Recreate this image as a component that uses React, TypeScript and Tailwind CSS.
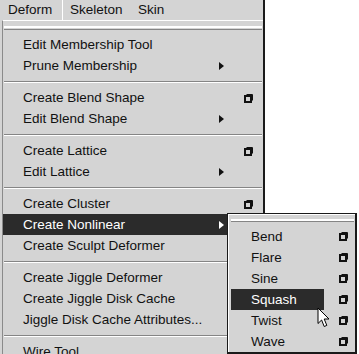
import React from "react";

type Item =
  | { kind: "sep" }
  | { kind: "item"; label: string; arrow?: boolean; box?: boolean; active?: boolean };

const mainItems: Item[] = [
  { kind: "item", label: "Edit Membership Tool" },
  { kind: "item", label: "Prune Membership", arrow: true },
  { kind: "sep" },
  { kind: "item", label: "Create Blend Shape", box: true },
  { kind: "item", label: "Edit Blend Shape", arrow: true },
  { kind: "sep" },
  { kind: "item", label: "Create Lattice", box: true },
  { kind: "item", label: "Edit Lattice", arrow: true },
  { kind: "sep" },
  { kind: "item", label: "Create Cluster", box: true },
  { kind: "item", label: "Create Nonlinear", arrow: true, active: true },
  { kind: "item", label: "Create Sculpt Deformer" },
  { kind: "sep" },
  { kind: "item", label: "Create Jiggle Deformer" },
  { kind: "item", label: "Create Jiggle Disk Cache" },
  { kind: "item", label: "Jiggle Disk Cache Attributes..." },
  { kind: "sep" },
  { kind: "item", label: "Wire Tool" },
];

const subItems = ["Bend", "Flare", "Sine", "Squash", "Twist", "Wave"];

const OptionBox = () => (
  <svg width="9" height="9" viewBox="0 0 9 9" className="block">
    <path d="M2.5 0.5 H8.5 V6.5" fill="none" stroke="#111" strokeWidth="1" />
    <rect x="1" y="2" width="6" height="6" fill="none" stroke="#111" strokeWidth="2" />
  </svg>
);

const Arrow = ({ light }: { light?: boolean }) => (
  <svg width="5" height="8" viewBox="0 0 5 8" className="block">
    <path d="M0 0 L5 4 L0 8 Z" fill={light ? "#fff" : "#111"} />
  </svg>
);

const TearOff = () => (
  <div className="h-[13px] flex flex-col justify-center px-[1px]">
    <div className="h-[2px] bg-white" />
    <div className="h-[1px] bg-[#d4d4d4]" />
    <div className="h-[1px] bg-[#858585]" />
  </div>
);

const Separator = () => (
  <div className="h-[11px] flex flex-col justify-center px-[1px]">
    <div className="h-[1px] bg-[#858585]" />
    <div className="h-[1px] bg-white" />
  </div>
);

export default function App() {
  return (
    <div className="relative w-[359px] h-[354px] bg-white overflow-hidden text-[13.5px] text-[#111] font-['Liberation_Sans',Arial,sans-serif]">
      <div className="w-[265px] h-full bg-[#d4d4d4] border-r-2 border-[#1a1a1a] flex flex-col">
        {/* menu bar */}
        <div className="h-[22px] flex items-stretch">
          <div className="w-[63px] pl-[8px] flex items-center border-r border-white">Deform</div>
          <div className="w-[75px] pl-[7px] flex items-center">Skeleton</div>
          <div className="flex items-center">Skin</div>
        </div>

        {/* dropdown */}
        <div className="flex-1 ml-[2px] border-l border-[#8a8a8a] border-t border-t-white">
          <TearOff />
          {mainItems.map((it, i) =>
            it.kind === "sep" ? (
              <Separator key={i} />
            ) : (
              <div
                key={i}
                className={
                  "h-[21px] flex items-center pl-[20px] pr-[10px] pt-[1px] " +
                  (it.active ? "bg-[#2b2b2b] text-white" : "")
                }
              >
                <span className="flex-1 whitespace-nowrap">{it.label}</span>
                <span className="w-[5px]">{it.arrow && <Arrow light={it.active} />}</span>
                <span className="w-[20px]" />
                <span className="w-[9px]">{it.box && <OptionBox />}</span>
              </div>
            )
          )}
        </div>
      </div>

      {/* nonlinear submenu */}
      <div className="absolute left-[227px] top-[213px] w-[130px] h-[141px] bg-[#d4d4d4] border-t border-l border-[#1a1a1a] border-r-2 border-r-[#1a1a1a] border-b-2 border-b-[#1a1a1a]">
        <div className="h-full border-t border-l border-white pl-[2px]">
          <div className="h-[11px] flex flex-col justify-center pr-[1px]">
            <div className="h-[2px] bg-white" />
            <div className="h-[1px] bg-[#858585]" />
          </div>
          {subItems.map((s) => (
            <div key={s} className="h-[21px] flex items-center">
              <div
                className={
                  "w-[93px] h-full flex items-center pl-[20px] pt-[1px] " +
                  (s === "Squash" ? "bg-[#2b2b2b] text-white" : "")
                }
              >
                {s}
              </div>
              <span className="ml-[15px]">
                <OptionBox />
              </span>
            </div>
          ))}
        </div>
      </div>

      {/* mouse cursor */}
      <svg className="absolute left-[317px] top-[307px]" width="13" height="21" viewBox="0 0 13 21">
        <path
          d="M1 1 L1 16.5 L4.6 13 L7.2 19.5 L9.8 18.4 L7.2 12 L12 12 Z"
          fill="#fff"
          stroke="#000"
          strokeWidth="1"
          strokeLinejoin="miter"
        />
      </svg>
    </div>
  );
}
